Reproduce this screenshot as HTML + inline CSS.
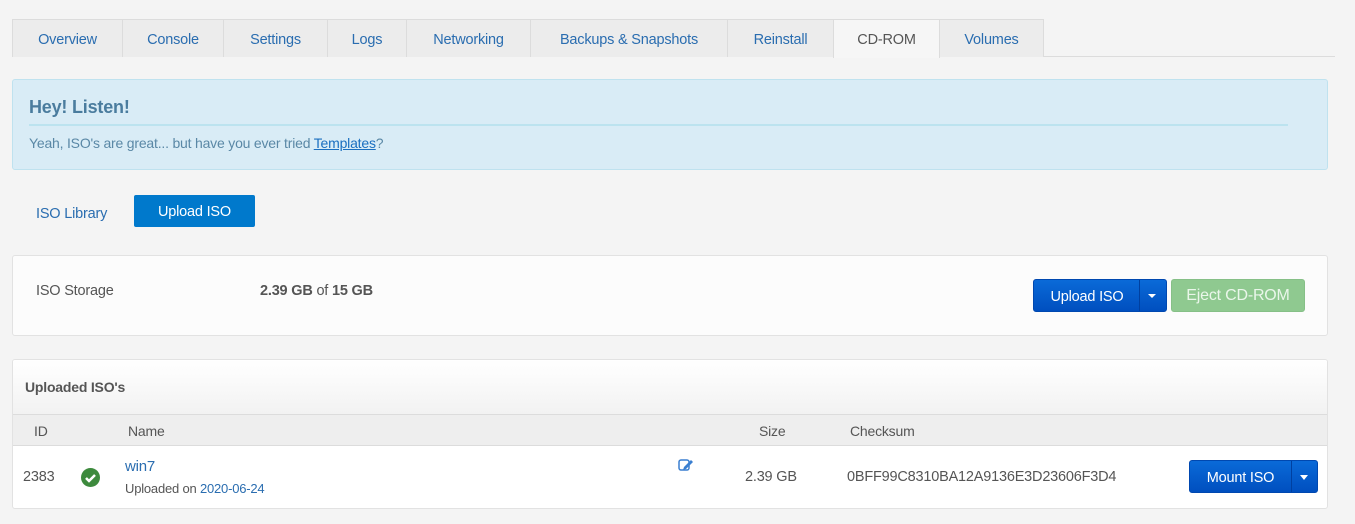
<!DOCTYPE html>
<html><head><meta charset="utf-8"><style>
*{box-sizing:border-box;margin:0;padding:0}
body{width:1355px;height:524px;background:#f4f4f4;font-family:"Liberation Sans",sans-serif;font-size:14px;color:#555;position:relative;overflow:hidden;letter-spacing:-0.2px}
.a{position:absolute}
.tab{position:absolute;top:19px;height:38px;background:#ececec;border:1px solid #dcdcdc;border-bottom:none;color:#2a6db0;font-size:14.5px;line-height:40px;text-align:center}
.btn{position:absolute;color:#fff;font-size:14.5px;border-radius:3px;text-align:center}
.blue{background:linear-gradient(#0a6ad8,#004fbf);border:1px solid #0048b0}
</style></head><body>
<div class="a" style="left:12px;top:56px;width:1323px;height:1px;background:#dcdcdc"></div>
<div class="tab" style="left:12px;width:111px">Overview</div>
<div class="tab" style="left:122px;width:102px">Console</div>
<div class="tab" style="left:223px;width:105px">Settings</div>
<div class="tab" style="left:327px;width:80px">Logs</div>
<div class="tab" style="left:406px;width:125px">Networking</div>
<div class="tab" style="left:530px;width:198px">Backups &amp; Snapshots</div>
<div class="tab" style="left:727px;width:107px">Reinstall</div>
<div class="tab" style="left:833px;width:107px;background:#f6f6f6;height:39px;color:#555">CD-ROM</div>
<div class="tab" style="left:939px;width:105px">Volumes</div>

<div class="a" style="left:12px;top:79px;width:1316px;height:91px;background:#d9ecf6;border:1px solid #bfe2ef;border-radius:3px"></div>
<div class="a" style="left:29px;top:97px;font-size:18px;font-weight:bold;color:#4a7c9e">Hey! Listen!</div>
<div class="a" style="left:29px;top:124px;width:1259px;height:2px;background:#bce3ef"></div>
<div class="a" style="left:29px;top:135px;color:#5a88a6">Yeah, ISO's are great... but have you ever tried <span style="color:#1a6fc0;text-decoration:underline">Templates</span>?</div>

<div class="a" style="left:36px;top:206px;color:#2a6db0;font-size:14.5px">ISO Library</div>
<div class="btn" style="left:134px;top:195px;width:121px;height:32px;line-height:34px;background:#0079cc;border-radius:2px">Upload ISO</div>

<div class="a" style="left:12px;top:255px;width:1316px;height:81px;background:#fcfcfc;border:1px solid #e2e2e2;border-radius:3px"></div>
<div class="a" style="left:36px;top:283px;color:#555;font-size:14.5px">ISO Storage</div>
<div class="a" style="left:260px;top:283px;color:#555;font-size:14.5px"><b>2.39 GB</b> of <b>15 GB</b></div>
<div class="btn blue" style="left:1033px;top:279px;width:134px;height:33px;line-height:34px"><span style="position:absolute;left:0;width:106px">Upload ISO</span><span style="position:absolute;left:105px;top:0;bottom:0;width:1px;background:#0040a0"></span><span style="position:absolute;left:114px;top:14px;border-left:4px solid transparent;border-right:4px solid transparent;border-top:4px solid #fff"></span></div>
<div class="btn" style="left:1171px;top:279px;width:134px;height:33px;line-height:32px;background:#8fc990;border:1px solid #86c087;color:#eaf6ea;font-size:16px">Eject CD-ROM</div>

<div class="a" style="left:12px;top:359px;width:1316px;height:150px;background:#fff;border:1px solid #e2e2e2;border-radius:3px;overflow:hidden">
<div style="height:55px;background:linear-gradient(#fff,#f2f2f2);border-bottom:1px solid #dcdcdc;padding:19px 0 0 12px;font-weight:bold;color:#555">Uploaded ISO's</div>
<div style="height:31px;background:#eeeeee;border-bottom:1px solid #dcdcdc;position:relative;color:#555">
<span class="a" style="left:21px;top:8px">ID</span><span class="a" style="left:115px;top:8px">Name</span><span class="a" style="left:746px;top:8px">Size</span><span class="a" style="left:837px;top:8px">Checksum</span></div>
</div>
<div class="a" style="left:23px;top:469px;font-size:14.5px">2383</div>
<div class="a" style="left:81px;top:468px;width:19px;height:19px;border-radius:50%;background:#3d8a3d"></div>
<svg class="a" style="left:81px;top:468px" width="19" height="19"><path d="M5 10l3 3 6-6" stroke="#fff" stroke-width="2.5" fill="none"/></svg>
<div class="a" style="left:125px;top:458px;color:#2a6db0;font-size:15px">win7</div>
<div class="a" style="left:125px;top:481px;font-size:13px">Uploaded on <span style="color:#2a6db0">2020-06-24</span></div>
<svg class="a" style="left:678px;top:458px" width="16" height="14"><rect x="1" y="2" width="10" height="10" rx="2" stroke="#3a7fd0" stroke-width="1.5" fill="none"/><path d="M6 9l7-7 2 2-7 7-3 1z" fill="#3a7fd0"/></svg>
<div class="a" style="left:745px;top:469px;font-size:14.5px">2.39 GB</div>
<div class="a" style="left:847px;top:469px;font-size:14.5px">0BFF99C8310BA12A9136E3D23606F3D4</div>
<div class="btn blue" style="left:1189px;top:460px;width:129px;height:33px;line-height:34px"><span style="position:absolute;left:0;width:101px">Mount ISO</span><span style="position:absolute;left:101px;top:0;bottom:0;width:1px;background:#0040a0"></span><span style="position:absolute;left:110px;top:14px;border-left:4px solid transparent;border-right:4px solid transparent;border-top:5px solid #fff"></span></div>
</body></html>
